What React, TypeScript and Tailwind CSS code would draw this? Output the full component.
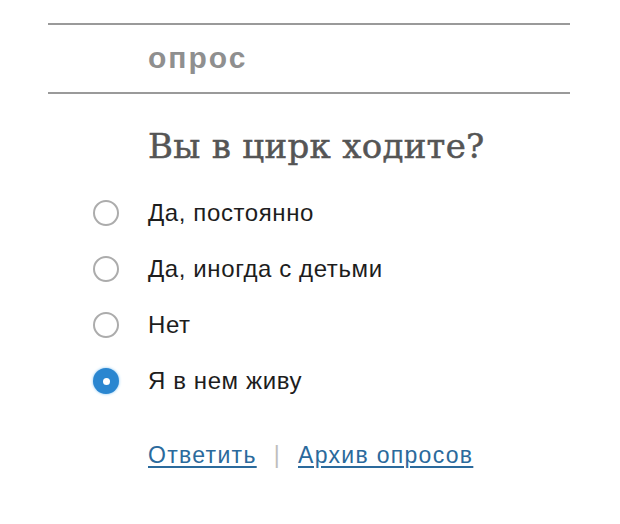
import React, { useState } from 'react';

const options = ['Да, постоянно', 'Да, иногда с детьми', 'Нет', 'Я в нем живу'];

const Radio: React.FC<{ checked: boolean }> = ({ checked }) =>
  checked ? (
    <span className="flex h-[26px] w-[26px] shrink-0 items-center justify-center rounded-full bg-[#2a86d0] shadow-[0_0_3px_#7fc0f0]">
      <span className="h-[7px] w-[7px] rounded-full bg-white" />
    </span>
  ) : (
    <span className="h-[26px] w-[26px] shrink-0 rounded-full border-2 border-[#acacac] bg-white" />
  );

const App: React.FC = () => {
  const [selected, setSelected] = useState(3);

  return (
    <div className="h-[524px] w-[620px] bg-white pt-[23px] font-['Liberation_Sans',Arial,sans-serif]">
      <div className="ml-[48px] w-[522px] border-y-2 border-[#9a9a9a]">
        <div className="flex h-[67px] items-center pl-[100px] pb-[2px] text-[30px] font-bold tracking-[2px] text-[#8f8f8f]">опрос</div>
      </div>

      <div className="pl-[148px] pt-[30px] font-['DejaVu_Serif',Georgia,serif] text-[34px] leading-[44px] tracking-[0.3px] text-[#555555] [-webkit-text-stroke:0.5px_#555555]">
        Вы в цирк ходите?
      </div>

      <div className="mt-[17px] flex flex-col pl-[93px]">
        {options.map((o, i) => (
          <button
            key={o}
            type="button"
            onClick={() => setSelected(i)}
            className="flex h-[56px] items-center text-left"
          >
            <Radio checked={selected === i} />
            <span className="ml-[29px] text-[24px] tracking-[0.6px] text-[#1d1d1d]">{o}</span>
          </button>
        ))}
      </div>

      <div className="mt-[29px] flex items-center pl-[148px] text-[23px] tracking-[1.3px] text-[#2b6a9c]">
        <a href="#" className="underline underline-offset-[3px]">Ответить</a>
        <span className="mx-[17px] text-[#bdbdbd]">|</span>
        <a href="#" className="underline underline-offset-[3px]">Архив опросов</a>
      </div>
    </div>
  );
};

export default App;
